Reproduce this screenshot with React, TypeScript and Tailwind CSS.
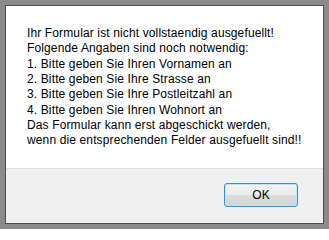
const lines = [
  "Ihr Formular ist nicht vollstaendig ausgefuellt!",
  "Folgende Angaben sind noch notwendig:",
  "1. Bitte geben Sie Ihren Vornamen an",
  "2. Bitte geben Sie Ihre Strasse an",
  "3. Bitte geben Sie Ihre Postleitzahl an",
  "4. Bitte geben Sie Ihren Wohnort an",
  "Das Formular kann erst abgeschickt werden,",
  "wenn die entsprechenden Felder ausgefuellt sind!!",
];

export default function App() {
  return (
    <div className="w-[329px] h-[229px] bg-[#8b8b8b] p-[5px] font-['Liberation_Sans',Arial,sans-serif]">
      <div className="flex flex-col h-full border border-[#4d4d4d] bg-white">
        <div className="flex-1 pt-[20px] pl-[21px] text-[12px] leading-[15.33px] tracking-[0.13px] text-black">
          {lines.map((l) => (
            <div key={l} className="whitespace-nowrap">{l}</div>
          ))}
        </div>
        <div className="h-[55px] border-t border-[#dfdfdf] bg-[#f0f0f0] flex justify-end pt-[14px] pr-[25px]">
          <button className="w-[74px] h-[24px] rounded-[3px] border border-[#3c8fd6] shadow-[inset_0_0_0_1px_#b9e6f9] bg-[linear-gradient(#f4f4f4_0%,#ececec_48%,#dcdcdc_52%,#d4d4d4_100%)] text-[12px] text-black leading-none">
            OK
          </button>
        </div>
      </div>
    </div>
  );
}
